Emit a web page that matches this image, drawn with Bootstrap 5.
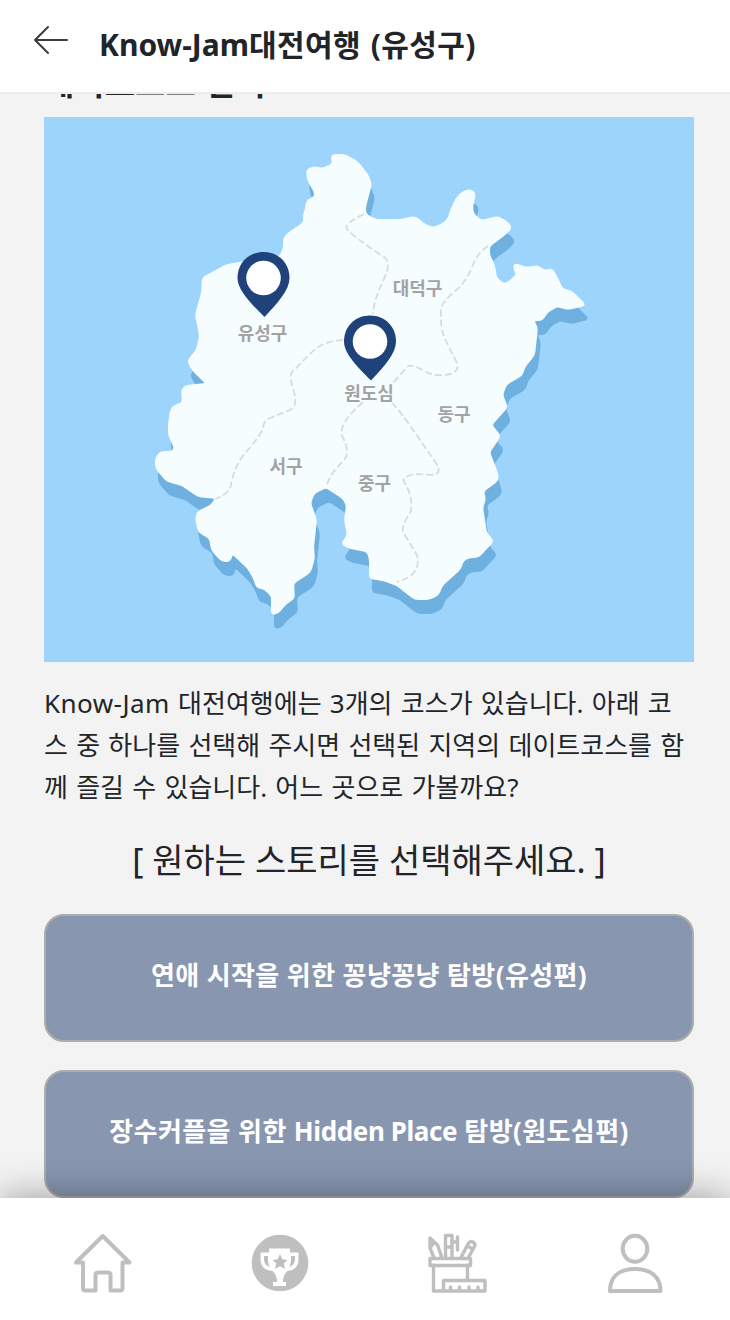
<!DOCTYPE html>
<html lang="ko">
<head>
<meta charset="utf-8">
<meta name="viewport" content="width=device-width, initial-scale=1">
<title>Know-Jam대전여행 (유성구)</title>
<link href="https://cdn.jsdelivr.net/npm/bootstrap@5.3.0/dist/css/bootstrap.min.css" rel="stylesheet">
<style>
body { background: #f3f3f3; color: #212529; font-family: "Noto Sans", "Noto Sans CJK KR", sans-serif; }
.app-top { height: 94px; background: #fff; border-bottom: 2px solid #ededed; padding: 0 0 3px 32px; }
.app-title { font-size: 30px; line-height: 44px; letter-spacing: .4px; word-spacing: 1.5px; margin: 1px 0 0 29px; }
.app-main { padding: 0 36px 0 44px; min-height: 0; }
.section-title { font-size: 33px; line-height: 40px; margin: -31px 0 14px; }
.map-view { background: #9dd4fc; height: 545px; }
.map-label { font: 700 18px "Noto Sans CJK KR", sans-serif; fill: #a3a3a3; text-anchor: middle; }
.intro-text { font-size: 26px; line-height: 42px; margin: 20px -6px 0 0; word-spacing: 1.5px; }
.intro-text .latin-run { letter-spacing: .45px; }
.app-title .latin-run { letter-spacing: 0; }
.story-btn .latin-run { letter-spacing: -.4px; }
.choose-text { font-size: 34px; line-height: 50px; margin: 27px 0 29px; }
.story-btn { height: 128px; background: #8896b0; border: 2px solid #adadad; border-radius: 20px; color: #fff; font-size: 26px; letter-spacing: .4px; padding-bottom: 12px; }
.story-list { gap: 28px; }
.app-nav { height: 122px; background: #fff; box-shadow: 0 0 36px rgba(0,0,0,.38); z-index: 2; padding: 32px 6px 0 14px; }
.nav-icon { fill: none; stroke: #bfbfbf; stroke-width: 4; stroke-linejoin: round; stroke-linecap: round; }
</style>
</head>
<body class="vh-100 d-flex flex-column overflow-hidden">
<header class="app-top d-flex align-items-center flex-shrink-0">
  <svg class="mb-2" width="38" height="32" viewBox="0 1 38 32" fill="none" stroke="#3c3c3c" stroke-width="2" stroke-linecap="round" stroke-linejoin="round"><path d="M35 16H3M16 3L3 16L16 29"/></svg>
  <h1 class="app-title fw-bold"><span class="latin-run">Know-Jam</span>대전여행 (유성구)</h1>
</header>
<main class="app-main flex-grow-1 overflow-hidden">
  <h2 class="section-title fw-bold">데이트코스 선택</h2>
  <div class="map-view">
    <svg class="d-block" width="650" height="545" viewBox="44 117 650 545">
      <defs>
        <path id="land" stroke-linejoin="round" stroke-width="2"/>
        <g id="pin"><path fill="#1f427b" d="M0-27C-15-27-26-16-26-1C-26 11-13 24 1 38C14 24 26 11 26-1C26-16 15-27 0-27Z"/><circle cy="-1" r="17.3" fill="#fff"/></g>
      </defs>
      <use href="#land" x="3" y="14" fill="#6eb0e0" stroke="#6eb0e0"/>
      <use href="#land" fill="#f6fdff" stroke="#f6fdff"/>
      <g fill="none" stroke="#d5dadb" stroke-width="1.7" stroke-dasharray="7 3">
        <path d="M364 214Q343 224 347 229Q352 236 384 257Q392 262 384 279Q374 299 373 314"/>
        <path d="M488 246Q477 253 472 267Q464 285 455 291Q442 302 441 309Q440 328 445 339L456 361Q462 374 443 375Q433 376 424 371Q411 363 407 367L393 383"/>
        <path d="M343 340Q324 341 313 351L292 372Q289 376 293 389Q299 405 290 410L270 418Q263 421 263 429Q257 440 246 452Q234 466 231 485Q229 494 215 499"/>
        <path d="M363 402Q338 424 342 436Q350 450 345 459Q327 477 327 487"/>
        <path d="M392 403Q400 411 411 427L436 463Q443 475 431 475L415 474Q401 477 404 482Q413 495 411 511Q401 527 403 532L417 555Q422 575 397 582"/>
      </g>
      <text class="map-label" x="417.500" y="295">대덕구</text>
      <text class="map-label" x="262.500" y="340">유성구</text>
      <text class="map-label" x="369" y="399.500">원도심</text>
      <text class="map-label" x="454" y="421">동구</text>
      <text class="map-label" x="286" y="473">서구</text>
      <text class="map-label" x="374.500" y="489.500">중구</text>
      <use href="#pin" x="263.5" y="279"/>
      <use href="#pin" x="370" y="342.500"/>
    </svg>
  </div>
  <p class="intro-text"><span class="latin-run">Know-Jam</span> 대전여행에는 3개의 코스가 있습니다. 아래 코<br>스 중 하나를 선택해 주시면 선택된 지역의 데이트코스를 함<br>께 즐길 수 있습니다. 어느 곳으로 가볼까요?</p>
  <p class="choose-text text-center">[ 원하는 스토리를 선택해주세요. ]</p>
  <div class="story-list d-grid">
    <button class="btn story-btn fw-bold">연애 시작을 위한 꽁냥꽁냥 탐방(유성편)</button>
    <button class="btn story-btn fw-bold">장수커플을 위한 <span class="latin-run">Hidden Place</span> 탐방(원도심편)</button>
  </div>
</main>
<nav class="app-nav d-flex flex-shrink-0">
  <a class="flex-fill text-center" href="#" aria-label="홈"><svg class="nav-icon" width="66" height="66" viewBox="70 1230 66 66"><path d="M102.700 1236L76 1262.500H83V1288Q83 1290.500 85.500 1290.500H95.500V1275Q95.500 1272.500 98 1272.500H108Q110.500 1272.500 110.500 1275V1290.500H120Q122.500 1290.500 122.500 1288V1262.500H129.500Z"/></svg></a>
  <a class="flex-fill text-center" href="#" aria-label="트로피"><svg width="66" height="66" viewBox="247 1230 66 66"><circle cx="280" cy="1263" r="28.300" fill="#bfbfbf"/><path fill="#fff" fill-rule="evenodd" d="M269 1248.500H290V1252.500H298.500V1259Q298.500 1270 287.500 1271Q283 1275 283 1282H286V1286H273V1282H277Q277 1275 272.500 1271Q260.500 1270 260.500 1259V1252.500H269ZM264 1256V1259Q264 1265 269.500 1267Q267.500 1262 268 1256ZM291 1256Q291.500 1262 289.500 1267Q295 1265 295 1259V1256Z"/><path fill="#bfbfbf" d="M280 1254L282.300 1259.300L287.500 1260L283.700 1263.500L285 1269L280 1266.200L275 1269L276.300 1263.500L272.500 1260L277.700 1259.300Z"/></svg></a>
  <a class="flex-fill text-center" href="#" aria-label="도구"><svg class="nav-icon" width="66" height="66" viewBox="425.500 1230 66 66"><path stroke-width="3.400" d="M430.500 1258.500H471V1265.500H430.500ZM434 1265V1291H444M468 1265V1280M444 1280.500H485.500V1291H444ZM451 1287V1290M460 1287V1290M469.500 1287V1290M478.500 1287V1290M434 1256.500L430.500 1248V1238L438 1245L442 1256.500M430.500 1248L434 1243M446 1256.500V1235.500H452.500V1256.500M446 1247H452M452 1242H458M458 1237V1250M462 1256.500L468.500 1244Q471 1240 474 1242.500Q476.500 1244 474.500 1247.500L469.500 1256.500M468 1246L473 1249"/></svg></a>
  <a class="flex-fill text-center" href="#" aria-label="내 정보"><svg class="nav-icon" width="66" height="66" viewBox="602 1230 66 66"><ellipse cx="635" cy="1248.700" rx="12.300" ry="13"/><path d="M610 1291C610 1277 619 1269 635 1269S660.500 1277 660.500 1291Z"/></svg></a>
</nav>
<script src="https://cdn.jsdelivr.net/npm/bootstrap@5.3.0/dist/js/bootstrap.bundle.min.js"></script>
<script>
// Coastline vertices, rounded off at each corner.
const coast = "333 155 345 155 357 162 367 174 371 184 368 195 365 207 365 214 375 220 402 220 413 217 418 219 425 225 433 228 441 225 448 220 452 208 457 198 463 192 470 190 475 193 472 207 473 214 481 221 498 217 508 223 511 228 505 234 489 246 489 255 494 265 496 278 503 284 508 283 517 275 514 268 515 264 527 268 538 266 544 271 552 269 557 278 562 289 572 292 585 305 568 309 557 306 547 312 542 320 533 320 537 328 534 355 524 367 522 375 506 384 502 395 507 407 491 425 500 436 489 452 497 473 498 480 483 491 485 500 482 507 486 533 493 541 478 557 470 557 463 560 460 569 442 585 438 595 428 599 415 599 397 585 383 580 370 578 370 558 367 551 350 548 342 544 348 535 345 520 347 505 343 498 326 487 314 493 310 503 316 520 313 547 314 558 310 572 293 583 294 598 285 604 278 613 272 614 272 596 265 589 257 587 254 578 248 568 232 553 230 561 222 561 212 550 210 538 199 532 196 518 198 512 212 505 216 498 198 496 182 485 167 481 156 468 156 458 161 452 172 452 175 448 169 435 169 424 171 410 174 406 183 403 182 391 185 386 207 384 193 370 188 361 197 350 200 337 199 330 196 315 202 293 203 278 227 265 240 263 280 257 284 248 284 238 289 233 304 223 304 214 306 209 307 201 315 197 315 192 308 180 307 170 315 167 323 169 333 164 332 158".split(" ").map(Number);
const pts = [];
for (let i = 0; i < coast.length; i += 2) pts.push([coast[i], coast[i + 1]]);
const toward = (a, b) => {
  const len = Math.hypot(b[0] - a[0], b[1] - a[1]);
  const t = Math.min(.5, 3.5 / len);
  return [a[0] + (b[0] - a[0]) * t, a[1] + (b[1] - a[1]) * t];
};
document.getElementById("land").setAttribute("d", pts.map((p, i) => {
  const before = toward(p, pts[(i + pts.length - 1) % pts.length]);
  const after = toward(p, pts[(i + 1) % pts.length]);
  return (i ? "L" : "M") + before + "Q" + p + " " + after;
}).join("") + "Z");
</script>
</body>
</html>
